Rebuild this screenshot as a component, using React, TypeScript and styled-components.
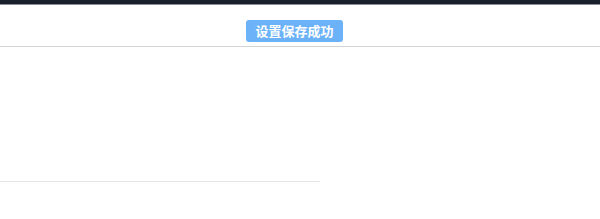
import React from "react";
import styled, { createGlobalStyle } from "styled-components";

const Global = createGlobalStyle`
  html, body { margin: 0; padding: 0; background: #fff; }
  body { font-family: "Noto Sans CJK SC", "Noto Sans", sans-serif; }
`;

const TopBar = styled.div`
  height: 4px;
  background: #18202e;
  border-bottom: 1px solid #8a8f96;
`;

const Header = styled.div`
  height: 42px;
  display: flex;
  justify-content: center;
  align-items: flex-start;
  padding: 15px 11px 0 0;
  box-sizing: border-box;
  border-bottom: 1px solid #d4d4d4;
`;

const Toast = styled.div`
  background: #6cb2f8;
  color: #fff;
  font-size: 13px;
  font-weight: 600;
  line-height: 22px;
  height: 22px;
  padding: 0 9px;
  border-radius: 3px;
  white-space: nowrap;
`;

const Body = styled.div`
  padding-top: 134px;
`;

const Divider = styled.div`
  width: 320px;
  height: 1px;
  background: #e4e4e4;
  box-shadow: 0 1px 1px #f2f2f2;
`;

export default function App() {
  return (
    <>
      <Global />
      <TopBar />
      <Header>
        <Toast>设置保存成功</Toast>
      </Header>
      <Body>
        <Divider />
      </Body>
    </>
  );
}
